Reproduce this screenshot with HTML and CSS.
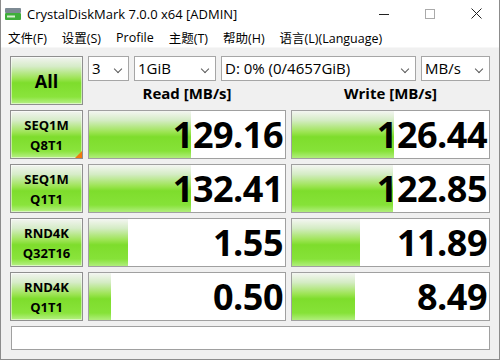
FILE: index.html
```html
<!DOCTYPE html>
<html lang="zh-CN">
<head>
  <meta charset="UTF-8" />
  <title>CrystalDiskMark 7.0.0 x64 [ADMIN]</title>
  <link rel="stylesheet" href="styles.css">
</head>
<body>
  <div class="window">
    <div class="titlebar">
      <svg class="app-icon" width="18" height="14" viewBox="0 0 18 14">
        <rect x="1" y="1" width="16" height="5" rx="1" fill="#7d8a93"/>
        <rect x="1" y="6" width="16" height="7" rx="1" fill="#3fae3a"/>
        <rect x="3" y="8.5" width="8" height="2" fill="#d8f0d0"/>
      </svg>
      <span class="title">CrystalDiskMark 7.0.0 x64 [ADMIN]</span>
      <div class="caption-btns">
        <span class="cap-btn">
          <svg width="10" height="10" viewBox="0 0 10 10"><line x1="0" y1="5.5" x2="10" y2="5.5" stroke="#222" stroke-width="1"/></svg>
        </span>
        <span class="cap-btn">
          <svg width="10" height="10" viewBox="0 0 10 10"><rect x="0.5" y="0.5" width="9" height="9" fill="none" stroke="#aaa" stroke-width="1"/></svg>
        </span>
        <span class="cap-btn">
          <svg width="11" height="11" viewBox="0 0 11 11"><path d="M0.5 0.5 L10.5 10.5 M10.5 0.5 L0.5 10.5" stroke="#222" stroke-width="1"/></svg>
        </span>
      </div>
    </div>

    <div class="menubar">
      <span>文件(F)</span>
      <span>设置(S)</span>
      <span>Profile</span>
      <span>主题(T)</span>
      <span>帮助(H)</span>
      <span>语言(L)(Language)</span>
    </div>

    <div class="panel">
      <div class="btn btn-all">All</div>
      <div class="head">
        <div class="combos">
          <div class="combo w-count">3<span class="chev"></span></div>
          <div class="combo w-size">1GiB<span class="chev"></span></div>
          <div class="combo w-drive">D: 0% (0/4657GiB)<span class="chev"></span></div>
          <div class="combo w-unit">MB/s<span class="chev"></span></div>
        </div>
        <div class="labels">
          <div>Read [MB/s]</div>
          <div>Write [MB/s]</div>
        </div>
      </div>

      <div class="btn btn-test marked">SEQ1M<br>Q8T1</div>
      <div class="result"><div class="bar" style="width: 102px"></div><span>129.16</span></div>
      <div class="result"><div class="bar" style="width: 102px"></div><span>126.44</span></div>

      <div class="btn btn-test">SEQ1M<br>Q1T1</div>
      <div class="result"><div class="bar" style="width: 102px"></div><span>132.41</span></div>
      <div class="result"><div class="bar" style="width: 101px"></div><span>122.85</span></div>

      <div class="btn btn-test">RND4K<br>Q32T16</div>
      <div class="result"><div class="bar" style="width: 39px"></div><span>1.55</span></div>
      <div class="result"><div class="bar" style="width: 68px"></div><span>11.89</span></div>

      <div class="btn btn-test">RND4K<br>Q1T1</div>
      <div class="result"><div class="bar" style="width: 22px"></div><span>0.50</span></div>
      <div class="result"><div class="bar" style="width: 63px"></div><span>8.49</span></div>

      <div class="status"></div>
    </div>
  </div>
</body>
</html>
```

FILE: styles.css
```css
body {
  margin: 0;
  font-family: "Open Sans", "Noto Sans CJK SC", sans-serif;
  color: #000;
  background: #fff;
}
.window {
  width: 500px;
  height: 360px;
  box-sizing: border-box;
  border: 1px solid #8c8c8c;
  border-top: none;
  background: #f0f0f0;
  overflow: hidden;
}
.titlebar {
  height: 27px;
  background: #fff;
  display: flex;
  align-items: center;
}
.app-icon {
  margin: 0 5px 0 3px;
}
.title {
  font-size: 13px;
  flex: 1;
}
.caption-btns {
  display: flex;
  align-self: stretch;
}
.cap-btn {
  width: 46px;
  display: flex;
  align-items: center;
  justify-content: center;
}
.menubar {
  height: 20px;
  background: #fff;
  display: flex;
  align-items: center;
  gap: 15px;
  padding-left: 7px;
  font-size: 12.5px;
  border-bottom: 1px solid #f7f7f7;
}
.panel {
  display: grid;
  grid-template-columns: 73px 198px 199px;
  grid-auto-rows: 49px;
  gap: 5px;
  padding: 8px 8px 0 9px;
}
.btn {
  box-sizing: border-box;
  border: 1px solid #8f8f8f;
  background: linear-gradient(#f2f4f0 0%, #d6ecc8 20%, #9ee456 45%, #7edd2c 55%, #8ae43c 85%, #b8f088 100%);
  box-shadow: inset 0 0 0 1px rgba(255, 255, 255, 0.5);
  font-weight: 700;
  text-align: center;
  display: flex;
  align-items: center;
  justify-content: center;
  position: relative;
}
.btn-all {
  height: 49px;
  font-size: 18px;
}
.btn-test {
  font-size: 13px;
  line-height: 20px;
}
.marked::after {
  content: "";
  position: absolute;
  right: 0;
  bottom: 0;
  border-style: solid;
  border-width: 0 0 7px 7px;
  border-color: transparent transparent #f07a10 transparent;
}
.head {
  grid-column: 2 / 4;
  display: flex;
  flex-direction: column;
}
.combos {
  display: flex;
  gap: 5px;
  height: 25px;
}
.combo {
  box-sizing: border-box;
  background: #fff;
  border: 1px solid #a6a6a6;
  font-size: 15px;
  line-height: 23px;
  padding-left: 3px;
  position: relative;
  white-space: nowrap;
}
.chev {
  position: absolute;
  right: 7px;
  top: 9px;
  width: 5px;
  height: 5px;
  border-right: 1px solid #5a5a5a;
  border-bottom: 1px solid #5a5a5a;
  transform: rotate(45deg);
}
.w-count { width: 41px; }
.w-size { width: 82px; }
.w-drive { width: 195px; }
.w-unit { width: 69px; }
.labels {
  display: grid;
  grid-template-columns: 198px 199px;
  gap: 5px;
  flex: 1;
  font-size: 15px;
  font-weight: 700;
  text-align: center;
  line-height: 24px;
}
.result {
  box-sizing: border-box;
  border: 1px solid #a0a0a0;
  background: #fff;
  position: relative;
  display: flex;
  align-items: center;
  justify-content: flex-end;
  padding-right: 2px;
}
.bar {
  position: absolute;
  left: 0;
  top: 0;
  bottom: 0;
  background: linear-gradient(#f4f6f2 0%, #d4ecc4 20%, #9ce452 45%, #7edd2c 55%, #86e238 85%, #b0ee7c 100%);
}
.result span {
  position: relative;
  font-size: 36px;
  font-weight: 700;
  letter-spacing: -0.5px;
  line-height: 1;
}
.status {
  grid-column: 1 / 4;
  height: 24px;
  box-sizing: border-box;
  background: #fff;
  border: 1px solid #a0a0a0;
  margin-left: 1px;
}
```
